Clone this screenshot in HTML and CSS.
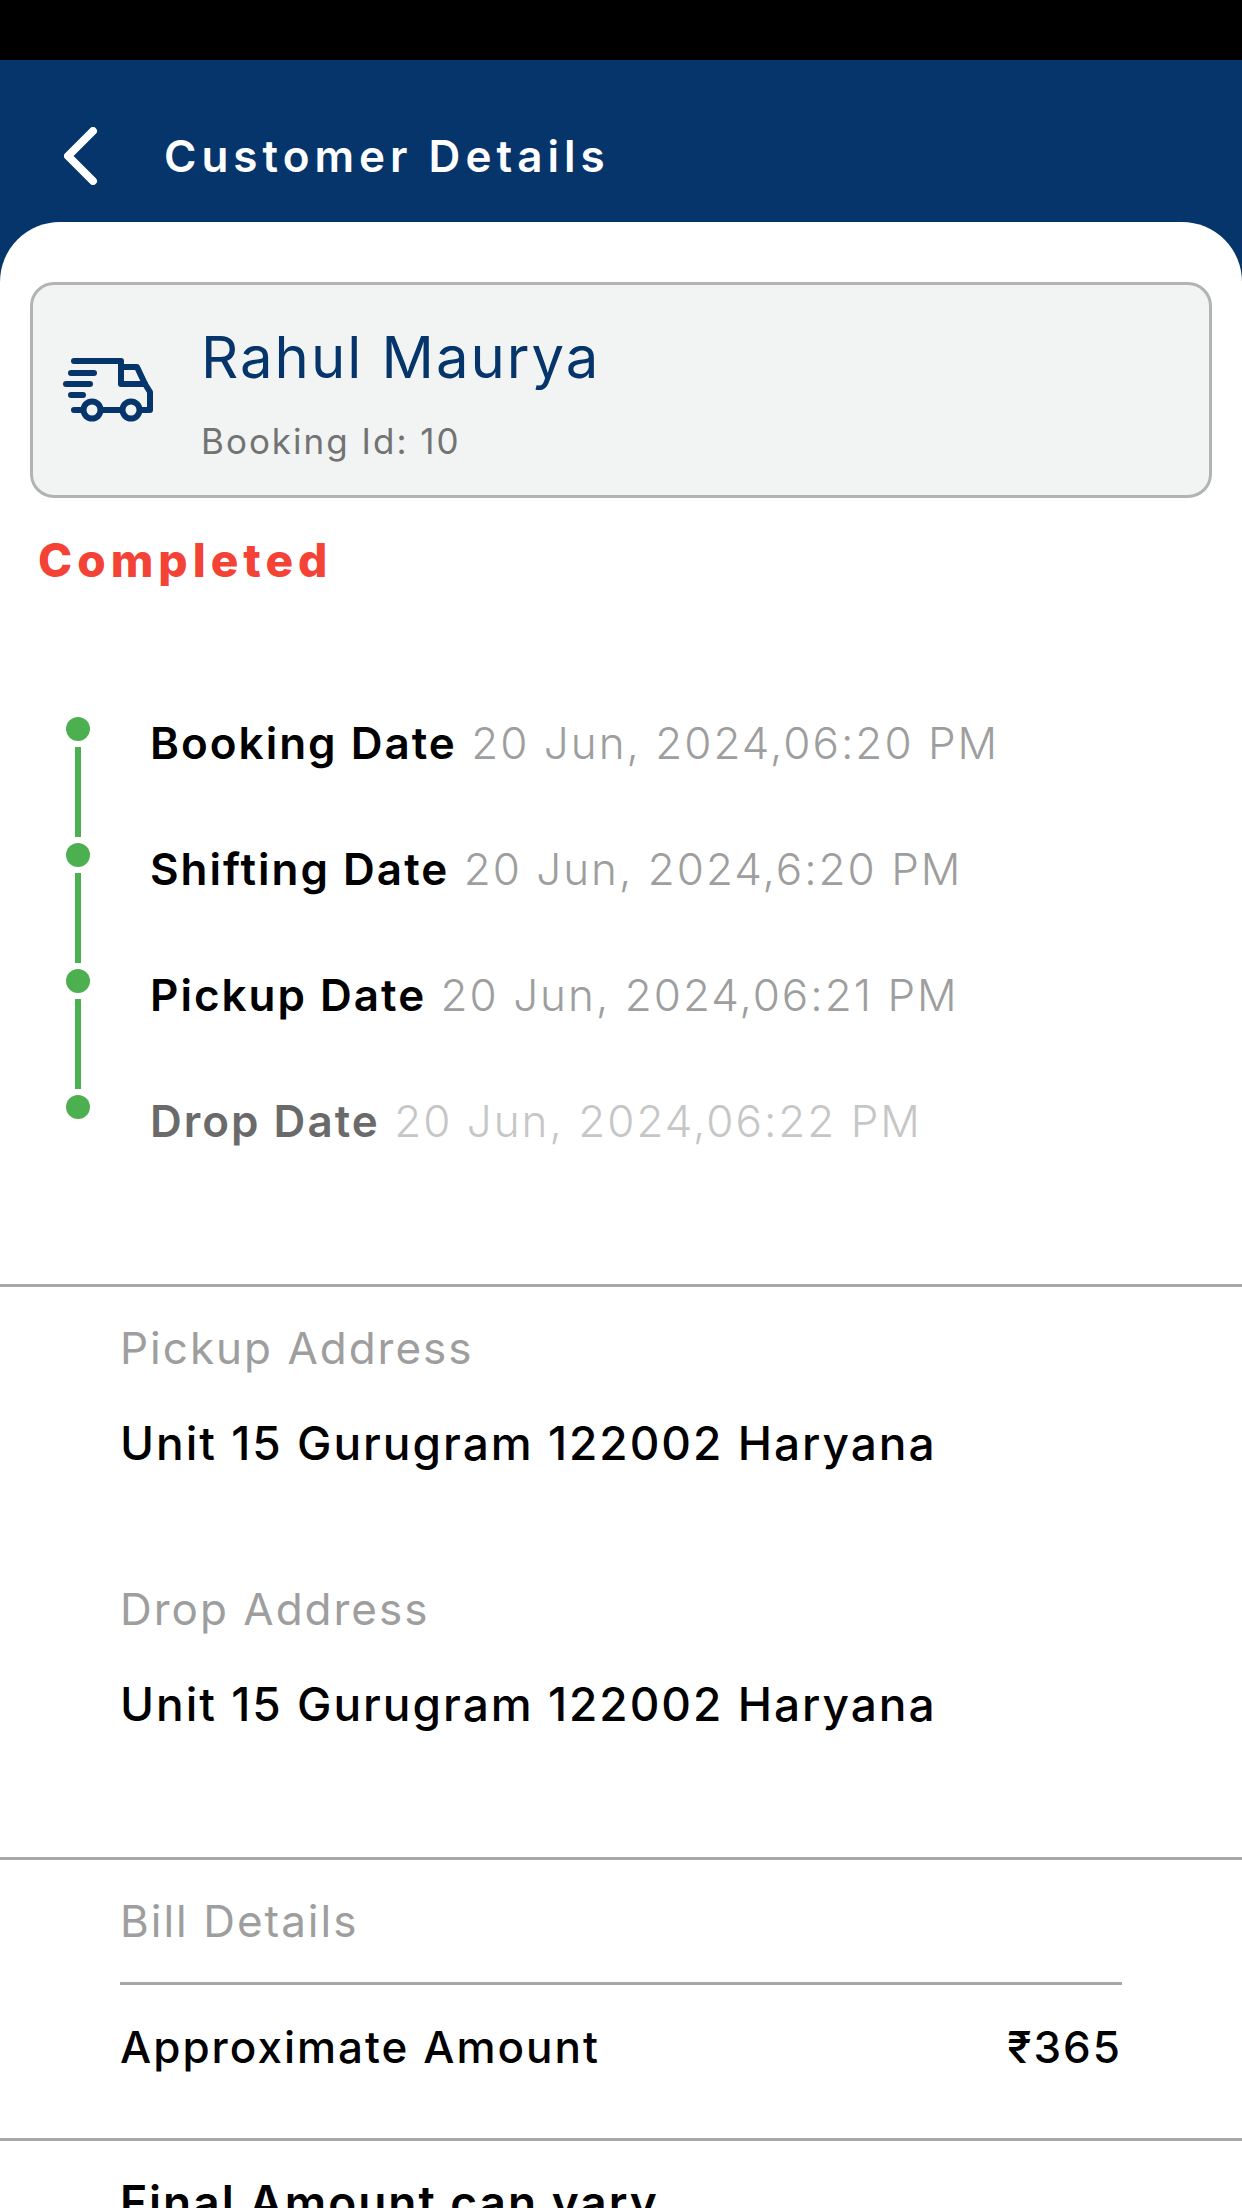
FILE: index.html
```html
<!DOCTYPE html>
<html lang="en">
<head>
    <meta charset="UTF-8">
    <meta name="viewport" content="width=device-width, initial-scale=1.0">
    <title>Customer Details</title>
    <link rel="stylesheet" href="styles.css">
</head>
<body>
    <div class="status-bar"></div>
    <header class="header">
        <button type="button" class="back" aria-label="Back">
            <svg width="34" height="58" viewBox="0 0 34 58" fill="none" stroke="currentColor" stroke-width="8" stroke-linecap="round" stroke-linejoin="round">
                <path d="M29 4 L4 29 L29 54"/>
            </svg>
        </button>
        <h1 class="title">Customer Details</h1>
    </header>
    <main class="sheet">
        <div class="customer">
            <svg class="truck" width="90" height="68" viewBox="0 0 90 68" fill="none" stroke="currentColor" stroke-width="6" stroke-linecap="round" stroke-linejoin="round">
                <path d="M11 3 H58 V26 H82"/>
                <path d="M58 9 H74 L82 26 L87 34 V52 H77"/>
                <path d="M8 15 H31 M3 26 H27 M8 37 H20"/>
                <path d="M11 52 H20 M38 52 H59"/>
                <circle cx="29" cy="52" r="8.5"/>
                <circle cx="68" cy="52" r="8.5"/>
            </svg>
            <div>
                <h2 class="name">Rahul Maurya</h2>
                <p class="booking-id">Booking Id: 10</p>
            </div>
        </div>
        <p class="status">Completed</p>

        <ol class="timeline">
            <li class="step">
                <span class="rail"></span>
                <p class="step-text"><b>Booking Date</b> <span class="date">20 Jun, 2024,06:20 PM</span></p>
            </li>
            <li class="step">
                <span class="rail"></span>
                <p class="step-text"><b>Shifting Date</b> <span class="date">20 Jun, 2024,6:20 PM</span></p>
            </li>
            <li class="step">
                <span class="rail"></span>
                <p class="step-text"><b>Pickup Date</b> <span class="date">20 Jun, 2024,06:21 PM</span></p>
            </li>
            <li class="step last">
                <span class="rail"></span>
                <p class="step-text"><b>Drop Date</b> <span class="date">20 Jun, 2024,06:22 PM</span></p>
            </li>
        </ol>

        <section class="section addresses">
            <div>
                <h3 class="label">Pickup Address</h3>
                <p class="address">Unit 15 Gurugram 122002 Haryana</p>
            </div>
            <div>
                <h3 class="label">Drop Address</h3>
                <p class="address">Unit 15 Gurugram 122002 Haryana</p>
            </div>
        </section>

        <section class="section bill">
            <h3 class="label">Bill Details</h3>
            <div class="bill-row">
                <span>Approximate Amount</span>
                <span>₹365</span>
            </div>
        </section>

        <section class="section">
            <p class="note">Final Amount can vary</p>
        </section>
    </main>
</body>
</html>
```
FILE: styles.css
```css
* {
    box-sizing: border-box;
}
body {
    display: flex;
    flex-direction: column;
    height: 100vh;
    margin: 0;
    overflow: hidden;
    background: #05356b;
    color: #000;
    font-family: Inter, sans-serif;
    font-size: 44px;
    line-height: 54px;
    letter-spacing: 2px;
}
h1, h2, h3, p, ol {
    margin: 0;
    padding: 0;
    font-weight: 400;
}
.status-bar {
    flex: none;
    height: 60px;
    background: #000;
}
.header {
    display: flex;
    flex: none;
    align-items: center;
    gap: 66px;
    height: 162px;
    padding: 30px 64px 0;
    color: #fff;
}
.back {
    display: flex;
    padding: 0;
    border: none;
    background: none;
    color: inherit;
    cursor: pointer;
}
.title {
    font-size: 44px;
    font-weight: 600;
    letter-spacing: 5px;
}
/* white panel that scrolls under the header */
.sheet {
    flex: 1;
    padding-top: 60px;
    overflow-y: auto;
    scrollbar-width: none;
    border-radius: 60px 60px 0 0;
    background: #fff;
}
.customer {
    display: flex;
    align-items: center;
    gap: 48px;
    margin: 0 30px;
    padding: 36px 30px 33px;
    border: 3px solid #b2b4b3;
    border-radius: 24px;
    background: #f2f4f4;
    color: #05356b;
}
.truck {
    flex: none;
}
.name {
    margin-bottom: 27px;
    font-size: 58px;
    line-height: 72px;
}
.booking-id {
    color: #737373;
    font-size: 35px;
    line-height: 42px;
}
.status {
    margin: 32px 38px 0;
    color: #f44336;
    font-size: 46px;
    font-weight: 800;
    line-height: 60px;
    letter-spacing: 5px;
}

.timeline {
    padding: 127px 66px 137px;
    list-style: none;
}
.step {
    display: flex;
    gap: 60px;
    min-height: 126px;
    line-height: 52px;
}
.rail {
    display: flex;
    flex: none;
    flex-direction: column;
    align-items: center;
    gap: 6px;
    width: 24px;
    padding-bottom: 6px;
}
.rail::before {
    content: "";
    width: 24px;
    height: 24px;
    border-radius: 50%;
    background: #4caf50;
}
.rail::after {
    content: "";
    flex: 1;
    width: 6px;
    background: #4caf50;
}
.step-text b {
    font-weight: 600;
}
.date {
    color: #9e9e9e;
    font-weight: 300;
}
.last {
    min-height: 0;
}
.last .rail::after {
    display: none;
}
.last .step-text {
    opacity: 0.58;
}

.section {
    padding: 34px 120px;
    border-top: 3px solid #a8a8a8;
}
.label {
    color: #9e9e9e;
    font-size: 44px;
}
.addresses {
    display: grid;
    gap: 112px;
    padding-bottom: 126px;
}
.address {
    margin-top: 41px;
    font-size: 46px;
    font-weight: 500;
}
.bill {
    padding-bottom: 64px;
}
.bill-row {
    display: flex;
    justify-content: space-between;
    margin-top: 34px;
    padding-top: 35px;
    border-top: 3px solid #a8a8a8;
    font-weight: 500;
}
.note {
    font-size: 46px;
    font-weight: 600;
}
```
